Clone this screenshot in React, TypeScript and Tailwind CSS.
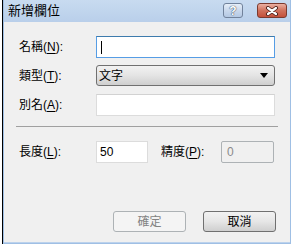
import React from 'react';

const font = { fontFamily: '"Liberation Sans", "Noto Sans CJK TC", sans-serif' };

// label with an underlined access key, like 名稱(N):
const Label = ({ text, hot, w = 'w-[77px]' }: { text: string; hot: string; w?: string }) => (
    <span className={`${w} inline-block shrink-0 text-[12px] leading-none text-black`}>
        {text}(<span className="underline underline-offset-2">{hot}</span>):
    </span>
);

const TitleButtons = () => (
    <div className="flex items-start gap-[14px] pt-[3px] pr-[3px]">
        <div className="w-[20px] h-[15px] rounded-[3px] border border-[#71829b] bg-gradient-to-b from-[#e6eef8] via-[#c9d8ec] to-[#b4c8e3] flex items-center justify-center">
            <span className="text-[12px] font-bold leading-none text-white [text-shadow:0_0_1px_#2b3b55,0_0_1px_#2b3b55]" style={font}>?</span>
        </div>
        <div className="w-[30px] h-[15px] rounded-[3px] border border-[#7c3a2e] bg-gradient-to-b from-[#eab0a2] via-[#d0715c] to-[#c4503a] flex items-center justify-center">
            <svg width="14" height="10" viewBox="0 0 14 10">
                <path d="M3 2 L11 8 M11 2 L3 8" stroke="#4a1f18" strokeWidth="4" strokeLinecap="round" />
                <path d="M3 2 L11 8 M11 2 L3 8" stroke="#ffffff" strokeWidth="2.2" strokeLinecap="round" />
            </svg>
        </div>
    </div>
);

export default function App() {
    return (
        <div className="w-[292px] h-[246px] bg-white flex overflow-hidden" style={font}>
            {/* sliver of the window behind */}
            <div className="w-[2px] h-full bg-white" />
            <div className="w-[1px] h-[244px] bg-black" />

            <div className="w-[288px] h-[244px] flex flex-col border border-t-0 border-[#9fbfe4] bg-[#bcd2ec]">
                {/* title bar */}
                <div className="h-[22px] flex items-start justify-between bg-gradient-to-b from-[#c8dbf0] to-[#b9cfea]">
                    <span className="pl-[4px] pt-[4px] text-[13px] leading-none text-black">新增欄位</span>
                    <TitleButtons />
                </div>

                {/* client area */}
                <div className="flex-1 mb-[1px] bg-[#f0f0f0] pl-[15px] pt-[14px] flex flex-col">
                    <div className="h-[22px] flex items-center">
                        <Label text="名稱" hot="N" />
                        <div className="w-[179px] h-[22px] border border-[#569de5] border-t-[#3d7bad] bg-white flex items-center pl-[4px]">
                            <div className="w-[1px] h-[13px] bg-black" />
                        </div>
                    </div>

                    <div className="h-[21px] mt-[7px] flex items-center">
                        <Label text="類型" hot="T" />
                        <div className="w-[179px] h-[21px] rounded-[3px] border border-[#707070] bg-gradient-to-b from-[#f2f2f2] via-[#e4e4e4] to-[#cfcfcf] flex items-center justify-between pl-[2px] pr-[6px]">
                            <span className="text-[12px] leading-none text-black">文字</span>
                            <svg width="8" height="5" viewBox="0 0 8 5">
                                <path d="M0 0 H8 L4 5 Z" fill="#000" />
                            </svg>
                        </div>
                    </div>

                    <div className="h-[22px] mt-[8px] flex items-center">
                        <Label text="別名" hot="A" />
                        <div className="w-[179px] h-[22px] border border-[#dcdcdc] border-t-[#d2d2d2] bg-white" />
                    </div>

                    <div className="w-[262px] h-[1px] ml-[-3px] mt-[10px] bg-[#a0a0a0]" />

                    <div className="h-[22px] mt-[14px] flex items-center">
                        <Label text="長度" hot="L" />
                        <div className="w-[52px] h-[22px] border border-[#dcdcdc] bg-white flex items-center pl-[3px]">
                            <span className="text-[12px] leading-none text-black">50</span>
                        </div>
                        <div className="ml-[13px] flex">
                            <Label text="精度" hot="P" w="w-[60px]" />
                        </div>
                        <div className="w-[53px] h-[22px] rounded-[2px] border border-[#adb2b5] bg-[#f0f0f0] flex items-center pl-[5px]">
                            <span className="text-[12px] leading-none text-[#8a8a8a]">0</span>
                        </div>
                    </div>

                    <div className="mt-auto mb-[10px] flex justify-end gap-[17px] pr-[14px]">
                        <div className="w-[73px] h-[21px] rounded-[3px] border border-[#adb2b5] bg-[#f4f4f4] flex items-center justify-center">
                            <span className="text-[12px] leading-none text-[#838383]">確定</span>
                        </div>
                        <div className="w-[73px] h-[21px] rounded-[3px] border border-[#707070] bg-gradient-to-b from-[#f2f2f2] via-[#e6e6e6] to-[#cfcfcf] flex items-center justify-center">
                            <span className="text-[12px] leading-none text-black">取消</span>
                        </div>
                    </div>
                </div>
            </div>
        </div>
    );
}
